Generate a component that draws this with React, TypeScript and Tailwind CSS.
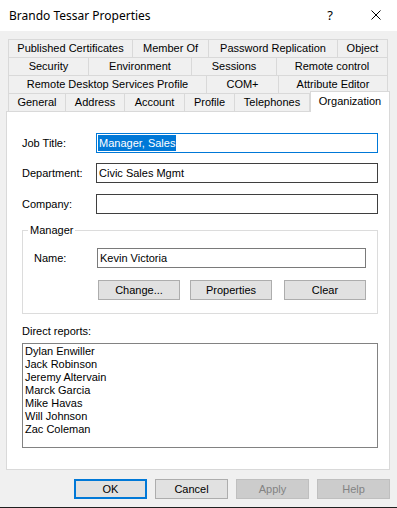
import React from "react";

type TabDef = { label: string; w: string; first?: boolean };

const rows: TabDef[][] = [
  [
    { label: "Published Certificates", w: "w-[125px]", first: true },
    { label: "Member Of", w: "w-[76px]" },
    { label: "Password Replication", w: "w-[129px]" },
    { label: "Object", w: "w-[50px]" },
  ],
  [
    { label: "Security", w: "w-[81px]", first: true },
    { label: "Environment", w: "w-[103px]" },
    { label: "Sessions", w: "w-[85px]" },
    { label: "Remote control", w: "w-[111px]" },
  ],
  [
    { label: "Remote Desktop Services Profile", w: "w-[199px]", first: true },
    { label: "COM+", w: "w-[72px]" },
    { label: "Attribute Editor", w: "w-[109px]" },
  ],
  [
    { label: "General", w: "w-[58px]", first: true },
    { label: "Address", w: "w-[59px]" },
    { label: "Account", w: "w-[60px]" },
    { label: "Profile", w: "w-[50px]" },
    { label: "Telephones", w: "w-[75px]" },
  ],
];

const reports = [
  "Dylan Enwiller",
  "Jack Robinson",
  "Jeremy Altervain",
  "Marck Garcia",
  "Mike Havas",
  "Will Johnson",
  "Zac Coleman",
];

const Tab: React.FC<{ tab: TabDef }> = ({ tab }) => (
  <div
    className={`flex h-[18px] items-center justify-center border-t border-r border-[#d9d9d9] ${
      tab.first ? "border-l" : ""
    } ${tab.w}`}
  >
    {tab.label}
  </div>
);

const Btn: React.FC<{ label: string; className?: string }> = ({ label, className = "" }) => (
  <button
    className={`flex h-[20px] w-[82px] items-center justify-center border border-[#adadad] bg-[#e1e1e1] ${className}`}
  >
    {label}
  </button>
);

const FooterBtn: React.FC<{ label: string; kind?: "default" | "disabled" | "normal" }> = ({
  label,
  kind = "normal",
}) => {
  const cls =
    kind === "default"
      ? "border-2 border-[#0078d7] bg-[#e1e1e1] text-black"
      : kind === "disabled"
      ? "border border-[#bfbfbf] bg-[#cccccc] text-[#838383]"
      : "border border-[#adadad] bg-[#e1e1e1] text-black";
  return (
    <button className={`flex h-[20px] w-[73px] items-center justify-center ${cls}`}>
      {label}
    </button>
  );
};

export default function App() {
  return (
    <div className="flex h-[508px] w-[397px] flex-col overflow-hidden bg-[#f0f0f0] font-['Liberation_Sans',Arial,sans-serif] text-[11px] leading-[13px] text-black">
      {/* Title bar */}
      <div className="flex h-[31px] shrink-0 items-center bg-white pl-[9px] pr-[16px] font-['Noto_Sans',sans-serif] text-[12px]">
        <span className="flex-1">Brando Tessar Properties</span>
        <span className="mr-[38px] text-[13px]">?</span>
        <svg width="10" height="10" viewBox="0 0 10 10" className="mb-[1px]">
          <path d="M0.5 0.5 L9.5 9.5 M9.5 0.5 L0.5 9.5" stroke="#000" strokeWidth="1" />
        </svg>
      </div>

      <div className="flex flex-1 flex-col pl-[6px] pr-[7px]">
        {/* Tab strip */}
        <div className="mt-[8px] flex flex-col pl-[2px]">
          {rows.map((row, i) => (
            <div key={i} className="flex h-[18px] items-start">
              {row.map((t) => (
                <Tab key={t.label} tab={t} />
              ))}
              {i === 3 && (
                <div className="relative z-10 -mt-[2px] flex h-[21px] w-[80px] items-start justify-center border-x border-t border-[#d9d9d9] bg-white pt-[3px]">
                  Organization
                </div>
              )}
            </div>
          ))}
        </div>

        {/* Page */}
        <div className="flex h-[359px] flex-col border border-[#d9d9d9] bg-white pl-[15px] pt-[21px]">
          <div className="flex items-center">
            <span className="w-[74px]">Job Title:</span>
            <div className="flex h-[20px] w-[282px] items-center border border-[#0078d7] px-[1px]">
              <span className="bg-[#0078d7] px-[1px] leading-[16px] text-white">Manager, Sales</span>
            </div>
          </div>
          <div className="mt-[10px] flex items-center">
            <span className="w-[74px]">Department:</span>
            <div className="flex h-[20px] w-[282px] items-center border border-[#3f3f3f] px-[2px]">
              Civic Sales Mgmt
            </div>
          </div>
          <div className="mt-[11px] flex items-center">
            <span className="w-[74px]">Company:</span>
            <div className="h-[20px] w-[282px] border border-[#3f3f3f]" />
          </div>

          <fieldset className="mt-[10px] w-[356px] border border-[#dcdcdc] pb-[13px] pl-[11px]">
            <legend className="-ml-[6px] px-[2px] leading-[13px]">Manager</legend>
            <div className="mt-[11px] flex items-center">
              <span className="w-[63px]">Name:</span>
              <div className="flex h-[20px] w-[269px] items-center border border-[#7a7a7a] px-[2px]">
                Kevin Victoria
              </div>
            </div>
            <div className="mt-[12px] flex pl-[64px]">
              <Btn label="Change..." />
              <Btn label="Properties" className="ml-[10px]" />
              <Btn label="Clear" className="ml-[12px]" />
            </div>
          </fieldset>

          <span className="mt-[11px]">Direct reports:</span>
          <div className="mt-[5px] flex h-[105px] w-[356px] flex-col border border-[#828282] pl-[2px] pt-[1px]">
            {reports.map((r) => (
              <span key={r}>{r}</span>
            ))}
          </div>
        </div>

        {/* Footer */}
        <div className="mt-[9px] flex justify-end gap-[8px]">
          <FooterBtn label="OK" kind="default" />
          <FooterBtn label="Cancel" />
          <FooterBtn label="Apply" kind="disabled" />
          <FooterBtn label="Help" kind="disabled" />
        </div>
      </div>
      <div className="h-[1px] shrink-0 bg-[#1f1f1f]" />
    </div>
  );
}
